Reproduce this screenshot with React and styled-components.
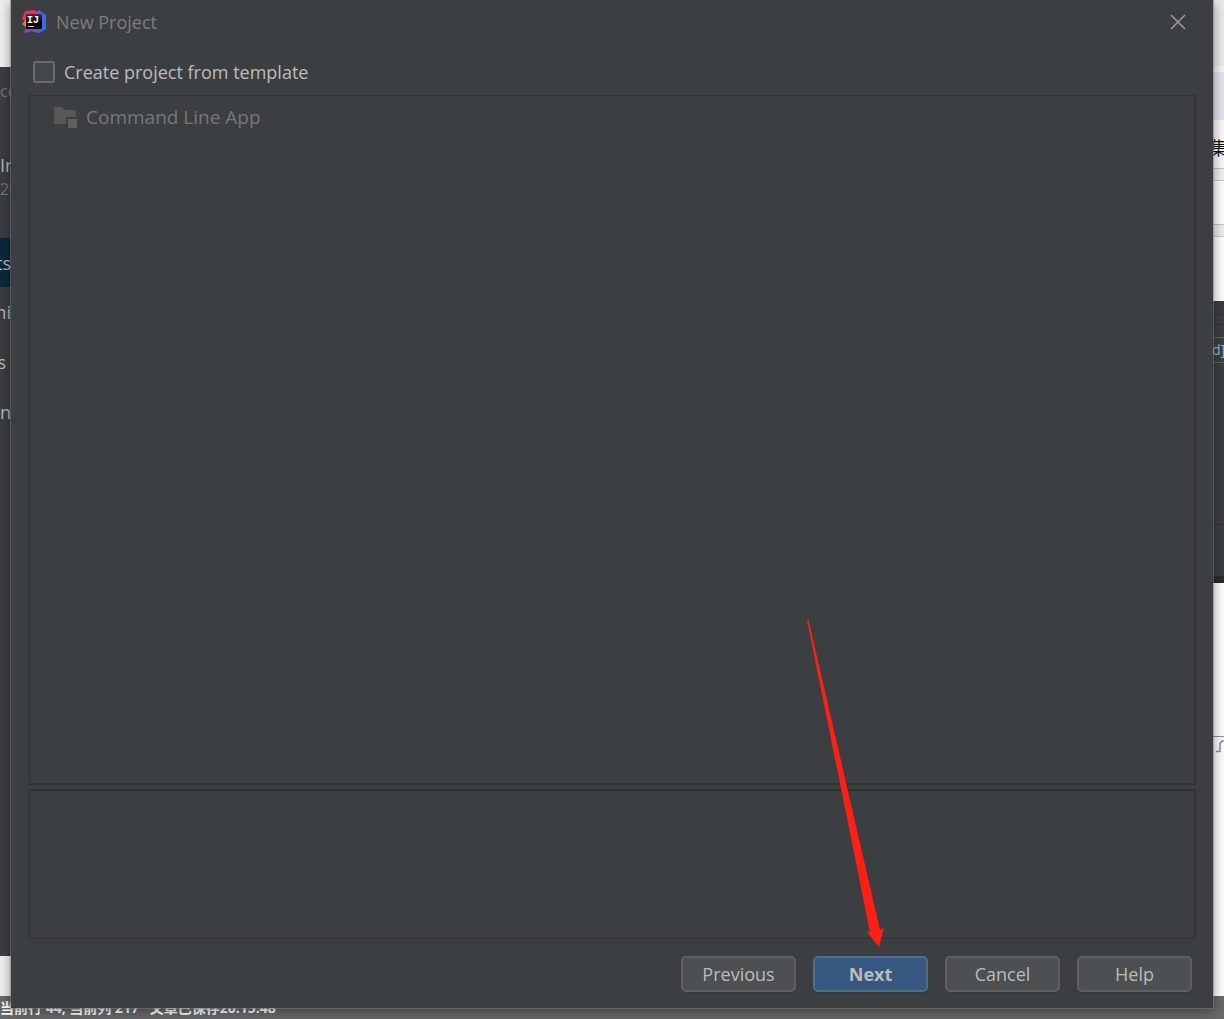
import React from "react";
import styled, { createGlobalStyle } from "styled-components";

const GlobalStyle = createGlobalStyle`
  * { box-sizing: border-box; }
  body {
    margin: 0;
    font-family: "Open Sans", "Noto Sans", "Noto Sans CJK SC", sans-serif;
    font-size: 18px;
    line-height: 24px;
    color: #bbbbbb;
    background: #ffffff;
  }
  button, input { font: inherit; color: inherit; margin: 0; }
`;

const Screen = styled.div`
  display: grid;
  grid-template: minmax(0, 1fr) / minmax(0, 1fr);
  height: 100vh;
  min-height: 480px;
  overflow: hidden;
`;

const Desktop = styled.div`
  grid-area: 1 / 1;
  display: flex;
  flex-direction: column;
  min-height: 0;
`;

const DesktopBody = styled.div`
  flex: 1;
  min-height: 0;
  display: flex;
  justify-content: space-between;
`;

const Strip = styled.div`
  width: 11px;
  display: flex;
  flex-direction: column;
  overflow: hidden;
  white-space: nowrap;
  background: ${(p) => p.$bg};
`;

const WelcomeWindow = styled.div`
  flex: 1;
  margin: 67px 0 40px;
  padding-top: 12px;
  background: #3c3f41;
`;

const WelcomeText = styled.div`
  height: ${(p) => p.$height || 24}px;
  color: ${(p) => (p.$muted ? "#777777" : "#bbbbbb")};
  font-size: ${(p) => (p.$muted ? 16 : 18)}px;
  margin-top: ${(p) => p.$gap || 0}px;
`;

const WelcomeItem = styled.div`
  display: flex;
  align-items: center;
  justify-content: flex-end;
  height: ${(p) => (p.$selected ? 49 : 50)}px;
  padding-right: ${(p) => p.$inset || 0}px;
  background: ${(p) => (p.$selected ? "#0d293e" : "transparent")};
`;

const Band = styled.div`
  flex: none;
  height: ${(p) => p.$height}px;
  padding-top: ${(p) => p.$top || 0}px;
  background: ${(p) => p.$bg};
  border-bottom: ${(p) => (p.$line ? `1px solid ${p.$line}` : "0")};
  display: flex;
  align-items: center;
  justify-content: ${(p) => p.$align || "flex-start"};
  color: ${(p) => p.$color || "#111111"};
  font-size: ${(p) => p.$size || 18}px;
`;

const StatusBar = styled.div`
  height: 23px;
  background: #696969;
  color: #ffffff;
  font-family: "Open Sans", "Noto Sans CJK SC", sans-serif;
  font-size: 14px;
  font-weight: 700;
  line-height: 23px;
  white-space: pre;
`;

const Dialog = styled.form`
  grid-area: 1 / 1;
  z-index: 1;
  margin: 0 10px 10px;
  display: flex;
  flex-direction: column;
  background: #3c3f41;
  background-clip: padding-box;
  border: 1px solid rgba(128, 128, 128, 0.5);
  border-top: 0;
  box-shadow: 0 2px 12px rgba(0, 0, 0, 0.4);
`;

const TitleBar = styled.header`
  display: flex;
  align-items: center;
  height: 44px;
  padding: 0 23px 0 11px;
  gap: 10px;
`;

const Title = styled.h1`
  flex: 1;
  margin: 0;
  font-size: 18px;
  font-weight: 400;
  color: #7c7c7c;
`;

const CloseButton = styled.button`
  display: flex;
  padding: 4px;
  border: 0;
  background: transparent;
  color: #9a9b9c;
`;

const Content = styled.main`
  flex: 1;
  min-height: 0;
  display: flex;
  flex-direction: column;
  padding: 14px 17px 17px 18px;
`;

const TemplateOption = styled.label`
  display: flex;
  align-items: center;
  gap: 9px;
  height: 28px;
  margin-bottom: 9px;
  padding-left: 4px;
`;

const CheckBox = styled.input`
  appearance: none;
  width: 22px;
  height: 22px;
  border: 2px solid #6b6b6b;
  border-radius: 3px;
  background: #43494a;
`;

const Panel = styled.section`
  border: 1px solid #323232;
  border-right-width: 2px;
`;

const TemplateList = styled(Panel)`
  flex: 1;
  min-height: 0;
  padding: 9px 24px;
  border-bottom-width: 2px;
`;

const Description = styled(Panel)`
  height: 150px;
  margin-top: 4px;
  border-top-width: 2px;
`;

const Template = styled.button`
  display: flex;
  align-items: center;
  gap: 8px;
  padding: 0;
  border: 0;
  background: transparent;
  font-size: 19px;
  &:disabled { color: #777777; }
`;

const Footer = styled.footer`
  display: flex;
  justify-content: flex-end;
  gap: 17px;
  padding: 0 21px 16px;
`;

const ButtonSlot = styled.div`
  position: relative;
`;

const Button = styled.button`
  width: 115px;
  height: 36px;
  padding: 0;
  border: 2px solid ${(p) => (p.$primary ? "#4c708c" : "#5e6060")};
  border-radius: 5px;
  background: ${(p) => (p.$primary ? "#365880" : "#4c5052")};
  font-weight: ${(p) => (p.$primary ? 700 : 400)};
  box-shadow: 0 1px 1px #36393b;
`;

const Arrow = styled.svg`
  position: absolute;
  left: -6px;
  bottom: 100%;
  margin-bottom: 8px;
  pointer-events: none;
`;

function IdeaLogo() {
  return (
    <svg width="24" height="24" viewBox="0 0 24 24" aria-hidden="true">
      <defs>
        <linearGradient id="blue" x1="0" y1="0" x2="1" y2="1">
          <stop offset="0" stopColor="#208fe8" />
          <stop offset="0.4" stopColor="#5a5fd8" />
          <stop offset="1" stopColor="#147cf5" />
        </linearGradient>
        <linearGradient id="violet" x1="0" y1="1" x2="1" y2="0">
          <stop offset="0" stopColor="#b62bd0" />
          <stop offset="1" stopColor="#4268e8" />
        </linearGradient>
        <linearGradient id="plate" x1="0" y1="0" x2="0" y2="1">
          <stop offset="0" stopColor="#3a3a3a" />
          <stop offset="0.5" stopColor="#080808" />
        </linearGradient>
      </defs>
      <path d="M12 4L17 0L24 5L24 19L17 23L9 21Z" fill="url(#blue)" />
      <path d="M4 17L2 23L10 21L17 23L20 19Z" fill="url(#violet)" />
      <path d="M3 1L13 0L17 5L5 13L0 9Z" fill="#fe2857" />
      <path d="M0 14L4 10L5 18Z" fill="#fc801d" />
      <rect x="4" y="4" width="16" height="15" fill="url(#plate)" />
      <text x="5" y="13" fill="#ffffff" fontFamily="Liberation Mono, monospace" fontSize="10" fontWeight="700">IJ</text>
      <rect x="6" y="16" width="6" height="1" fill="#cccccc" />
    </svg>
  );
}

function FolderIcon() {
  return (
    <svg width="24" height="22" viewBox="0 0 24 22" aria-hidden="true">
      <path d="M0 1H8L11 4H22V11H12V18H0Z" fill="#565857" />
      <rect x="14" y="13" width="9" height="9" fill="#5e6060" />
    </svg>
  );
}

export default function App() {
  return (
    <>
      <GlobalStyle />
      <Screen>
        <Desktop>
          <DesktopBody>
            <Strip $bg="#f2f2f2">
              <WelcomeWindow>
                <WelcomeText $muted $height={62}>co</WelcomeText>
                <WelcomeText $gap={12}>In</WelcomeText>
                <WelcomeText $muted $height={61}>20</WelcomeText>
                <WelcomeItem $selected>ts</WelcomeItem>
                <WelcomeItem>mi</WelcomeItem>
                <WelcomeItem $inset={5}>s</WelcomeItem>
                <WelcomeItem>n</WelcomeItem>
              </WelcomeWindow>
            </Strip>
            <Strip $bg="#ffffff">
              <Band $height={66} $bg="#ebebeb" />
              <Band $height={6} $bg="#f7f7f7" />
              <Band $height={48} $bg="#e6e6ec" />
              <Band $height={49} $top={8} $bg="#fafafa" $line="#c4c4c4" $align="center">集</Band>
              <Band $height={12} $bg="#f2f2f2" $line="#c8c8c8" />
              <Band $height={44} $bg="#ffffff" $line="#c4c4c4" />
              <Band $height={12} $bg="#eeeeee" $line="#d0d0d0" />
              <Band $height={64} $bg="#ffffff" />
              <Band $height={14} $bg="#3c3f41" $line="#323232" />
              <Band $height={10} $bg="#3c3f41" $line="#323232" />
              <Band $height={13} $bg="#3c3f41" $line="#606366" />
              <Band $height={25} $bg="#3c3f41" $line="#606366" $color="#a9b7c6" $size={14} $align="center">d]</Band>
              <Band $height={162} $bg="#3c3f41" $line="#323232" />
              <Band $height={51} $bg="#3c3f41" />
              <Band $height={7} $bg="#2b2b2b" />
              <Band $height={154} $bg="#ffffff" $line="#9090a4" />
              <svg width="11" height="18" viewBox="0 0 11 18" fill="none" stroke="#9090a4" strokeWidth="1.5" aria-hidden="true">
                <path d="M3 14.500H7V6.500L9 4H11" />
              </svg>
            </Strip>
          </DesktopBody>
          <StatusBar>{"当前行 44, 当前列 217   文章已保存20:15:48"}</StatusBar>
        </Desktop>

        <Dialog onSubmit={(e) => e.preventDefault()}>
          <TitleBar>
            <IdeaLogo />
            <Title>New Project</Title>
            <CloseButton type="button" aria-label="Close">
              <svg width="16" height="16" viewBox="0 0 16 16" fill="none" stroke="currentColor" strokeWidth="1.5" aria-hidden="true">
                <path d="M1 1L15 15M15 1L1 15" />
              </svg>
            </CloseButton>
          </TitleBar>
          <Content>
            <TemplateOption htmlFor="from-template">
              <CheckBox id="from-template" type="checkbox" />
              Create project from template
            </TemplateOption>
            <TemplateList>
              <Template type="button" disabled>
                <FolderIcon />
                Command Line App
              </Template>
            </TemplateList>
            <Description />
          </Content>
          <Footer>
            <Button type="button">Previous</Button>
            <ButtonSlot>
              <Button type="submit" $primary>Next</Button>
              <Arrow width="79" height="328" viewBox="0 0 79 328" aria-hidden="true">
                <path d="M0 0L1.500 0L73 310L77 307L72 327L59 311L63 312Z" fill="#ff1f14" />
              </Arrow>
            </ButtonSlot>
            <Button type="button">Cancel</Button>
            <Button type="button">Help</Button>
          </Footer>
        </Dialog>
      </Screen>
    </>
  );
}
